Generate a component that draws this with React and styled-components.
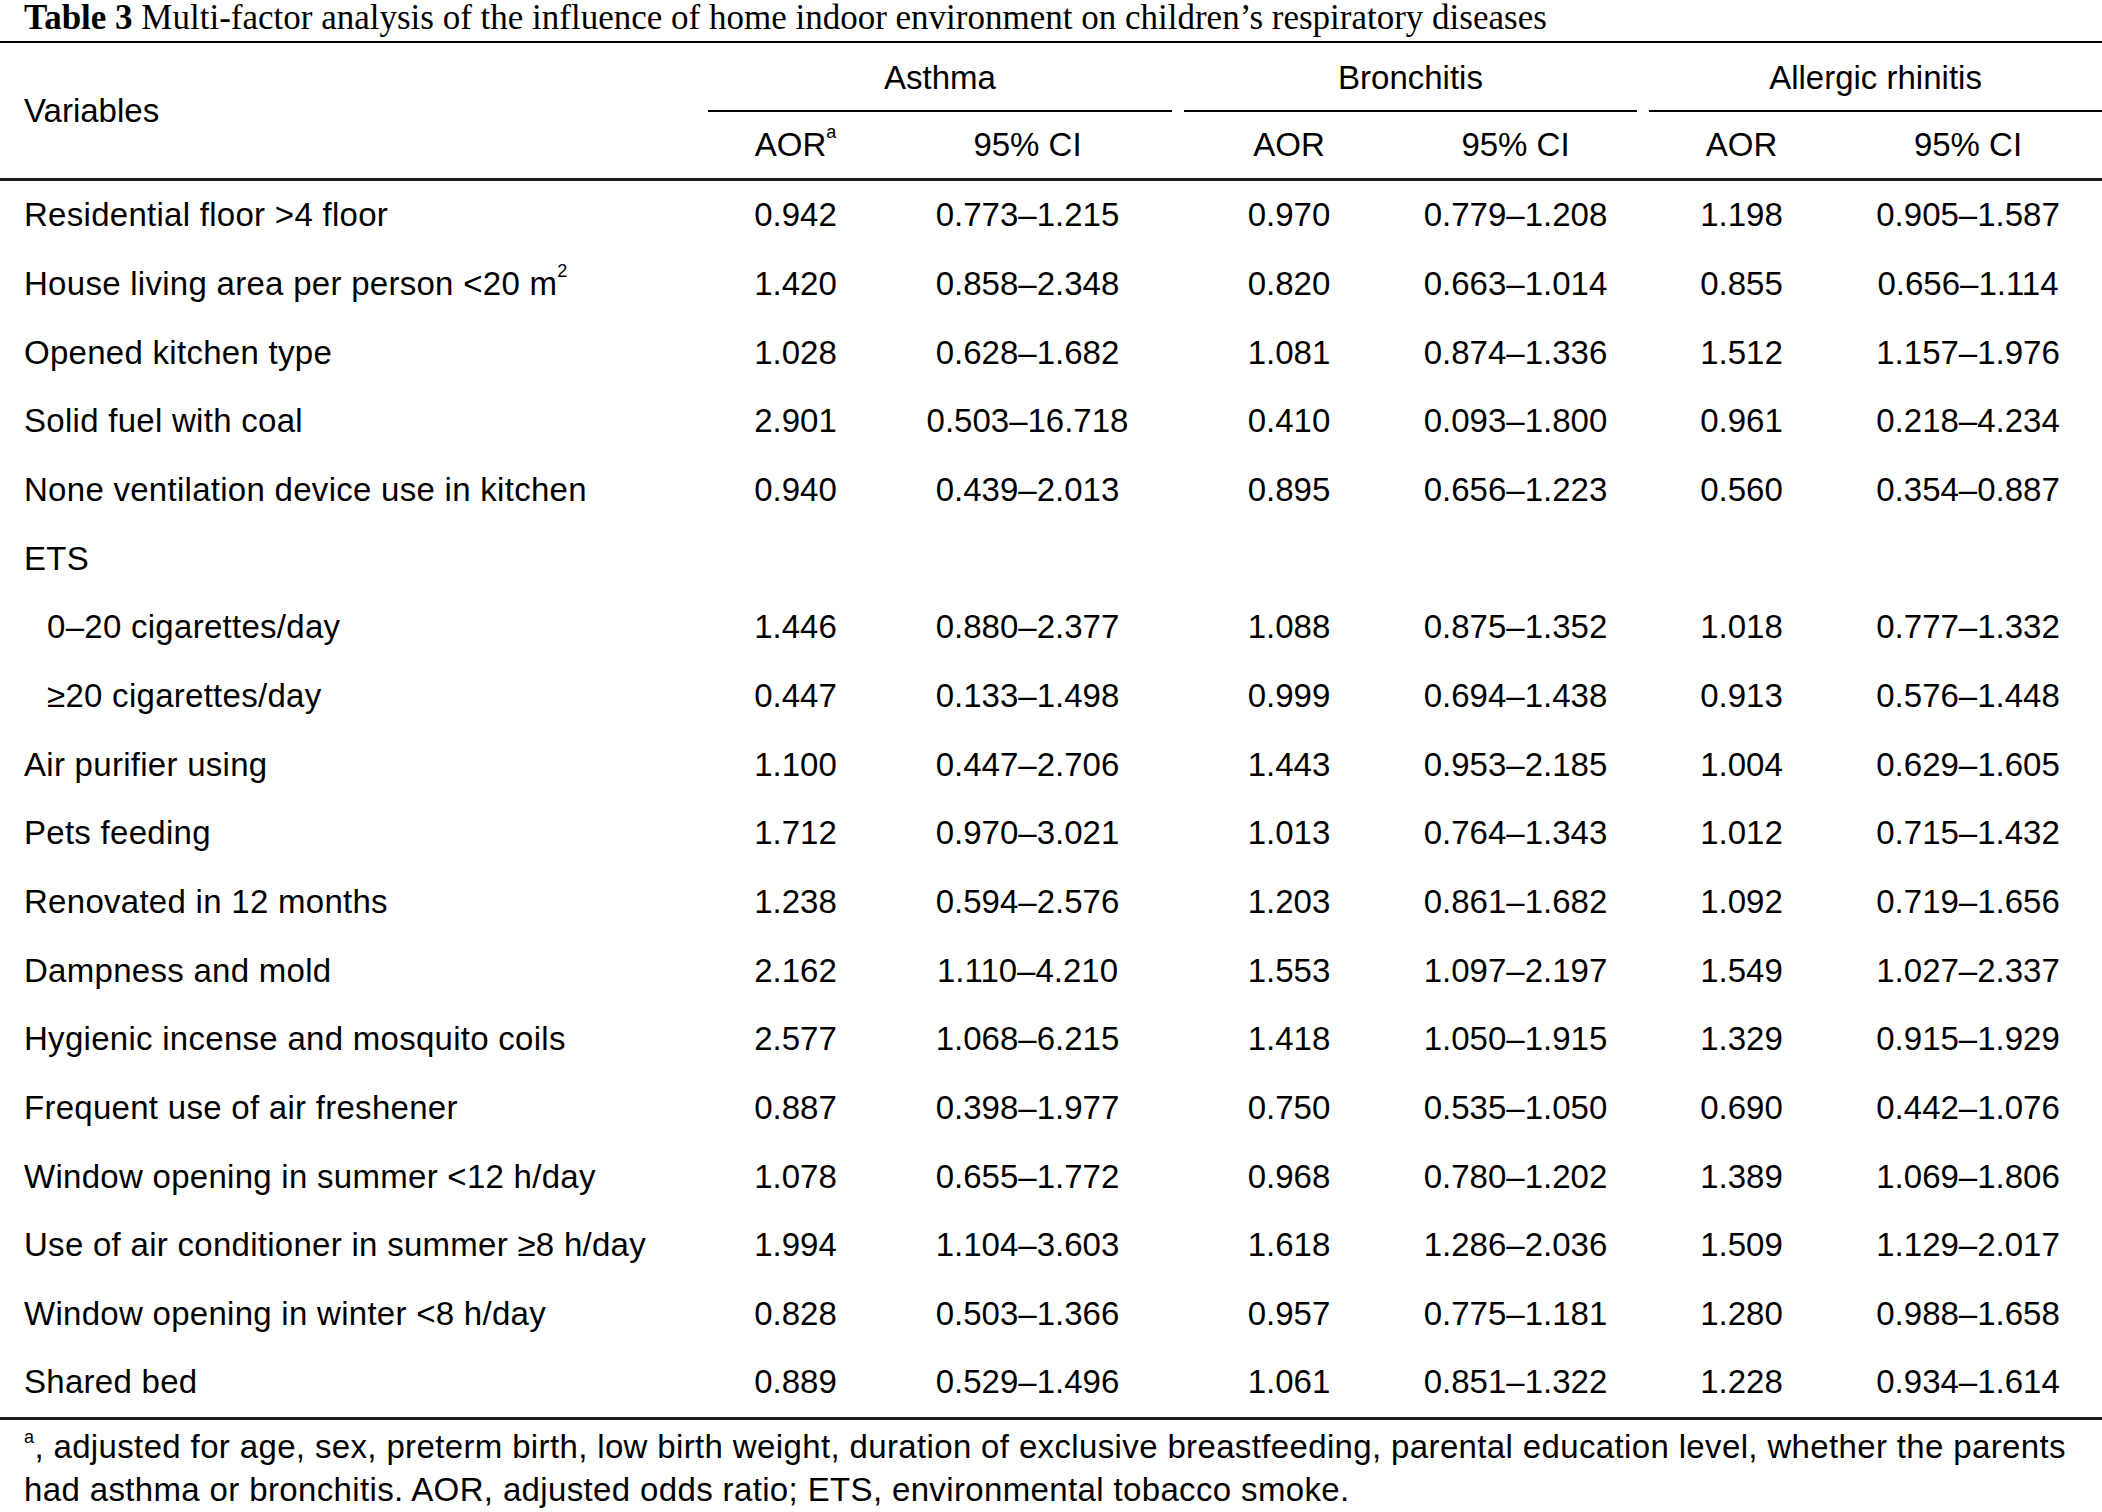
import React from "react";
import styled, { createGlobalStyle } from "styled-components";

const Global = createGlobalStyle`
  html, body { margin: 0; padding: 0; background: #fff; }
  body { color: #000; font-family: "Liberation Sans", Arial, sans-serif; }
`;

const Page = styled.div`
  width: 2102px;
  background: #fff;
`;

const Caption = styled.div`
  height: 41px;
  padding-left: 24px;
  box-sizing: border-box;
  font-family: "Liberation Serif", "Times New Roman", serif;
  font-size: 35px;
  line-height: 36px;
  letter-spacing: 0;
  white-space: nowrap;
  color: #000;
`;

const CaptionLabel = styled.b`
  font-weight: 700;
`;

const Table = styled.table`
  width: 2102px;
  table-layout: fixed;
  border-collapse: separate;
  border-spacing: 0;
  border-top: 2px solid #000;
  border-bottom: 3px solid #1c1c1c;
  font-size: 33px;
`;

const HeadCell = styled.th`
  box-sizing: border-box;
  padding: 0;
  font-weight: 400;
  text-align: ${(p) => (p.$left ? "left" : "center")};
  padding-left: ${(p) => (p.$left ? "24px" : "0")};
  height: ${(p) => p.$h || 66}px;
  vertical-align: middle;
  border-bottom: ${(p) => (p.$rule ? `${p.$rule}px solid ${p.$rule > 2 ? "#1c1c1c" : "#000"}` : "none")};
  white-space: nowrap;
`;

const GroupCell = styled(HeadCell)`
  padding-top: 2px;
`;

const Row = styled.tr``;

const Cell = styled.td`
  box-sizing: border-box;
  padding: 0;
  height: 68.67px;
  text-align: ${(p) => (p.$left ? "left" : "center")};
  padding-left: ${(p) => (p.$left ? (p.$indent ? "47px" : "24px") : "0")};
  letter-spacing: ${(p) => (p.$left ? "0.28px" : "0")};
  vertical-align: middle;
  white-space: nowrap;
`;

const Sup = styled.sup`
  font-size: 18px;
  vertical-align: top;
  position: relative;
  top: -3px;
  line-height: 1;
`;

const Note = styled.p`
  margin: 5px 0 0;
  padding: 0 20px 0 24px;
  font-size: 33px;
  line-height: 43px;
  letter-spacing: 0.36px;
`;

const NoteSup = styled.sup`
  font-size: 18px;
  vertical-align: top;
  position: relative;
  top: 3px;
  line-height: 1;
`;

const rows = [
  { label: "Residential floor >4 floor", v: ["0.942", "0.773–1.215", "0.970", "0.779–1.208", "1.198", "0.905–1.587"] },
  { label: <>House living area per person &lt;20 m<Sup>2</Sup></>, v: ["1.420", "0.858–2.348", "0.820", "0.663–1.014", "0.855", "0.656–1.114"] },
  { label: "Opened kitchen type", v: ["1.028", "0.628–1.682", "1.081", "0.874–1.336", "1.512", "1.157–1.976"] },
  { label: "Solid fuel with coal", v: ["2.901", "0.503–16.718", "0.410", "0.093–1.800", "0.961", "0.218–4.234"] },
  { label: "None ventilation device use in kitchen", v: ["0.940", "0.439–2.013", "0.895", "0.656–1.223", "0.560", "0.354–0.887"] },
  { label: "ETS", v: null },
  { label: "0–20 cigarettes/day", indent: true, v: ["1.446", "0.880–2.377", "1.088", "0.875–1.352", "1.018", "0.777–1.332"] },
  { label: "≥20 cigarettes/day", indent: true, v: ["0.447", "0.133–1.498", "0.999", "0.694–1.438", "0.913", "0.576–1.448"] },
  { label: "Air purifier using", v: ["1.100", "0.447–2.706", "1.443", "0.953–2.185", "1.004", "0.629–1.605"] },
  { label: "Pets feeding", v: ["1.712", "0.970–3.021", "1.013", "0.764–1.343", "1.012", "0.715–1.432"] },
  { label: "Renovated in 12 months", v: ["1.238", "0.594–2.576", "1.203", "0.861–1.682", "1.092", "0.719–1.656"] },
  { label: "Dampness and mold", v: ["2.162", "1.110–4.210", "1.553", "1.097–2.197", "1.549", "1.027–2.337"] },
  { label: "Hygienic incense and mosquito coils", v: ["2.577", "1.068–6.215", "1.418", "1.050–1.915", "1.329", "0.915–1.929"] },
  { label: "Frequent use of air freshener", v: ["0.887", "0.398–1.977", "0.750", "0.535–1.050", "0.690", "0.442–1.076"] },
  { label: "Window opening in summer <12 h/day", v: ["1.078", "0.655–1.772", "0.968", "0.780–1.202", "1.389", "1.069–1.806"] },
  { label: "Use of air conditioner in summer ≥8 h/day", v: ["1.994", "1.104–3.603", "1.618", "1.286–2.036", "1.509", "1.129–2.017"] },
  { label: "Window opening in winter <8 h/day", v: ["0.828", "0.503–1.366", "0.957", "0.775–1.181", "1.280", "0.988–1.658"] },
  { label: "Shared bed", v: ["0.889", "0.529–1.496", "1.061", "0.851–1.322", "1.228", "0.934–1.614"] },
];

const widths = [708, 175, 289, 12, 210, 243, 12, 185, 268];

export default function App() {
  return (
    <Page>
      <Global />
      <Caption>
        <CaptionLabel>Table 3</CaptionLabel> Multi-factor analysis of the influence of home indoor environment on children’s respiratory diseases
      </Caption>
      <Table>
        <colgroup>
          {widths.map((w, i) => (
            <col key={i} style={{ width: w }} />
          ))}
        </colgroup>
        <thead>
          <tr>
            <HeadCell rowSpan={2} $left $rule={3} $h={69}>Variables</HeadCell>
            <GroupCell colSpan={2} $rule={2} $h={69}>Asthma</GroupCell>
            <HeadCell $h={69} />
            <GroupCell colSpan={2} $rule={2} $h={69}>Bronchitis</GroupCell>
            <HeadCell $h={69} />
            <GroupCell colSpan={2} $rule={2} $h={69}>Allergic rhinitis</GroupCell>
          </tr>
          <tr>
            <HeadCell $rule={3} $h={69}>AOR<Sup>a</Sup></HeadCell>
            <HeadCell $rule={3} $h={69}>95% CI</HeadCell>
            <HeadCell $rule={3} $h={69} />
            <HeadCell $rule={3} $h={69}>AOR</HeadCell>
            <HeadCell $rule={3} $h={69}>95% CI</HeadCell>
            <HeadCell $rule={3} $h={69} />
            <HeadCell $rule={3} $h={69}>AOR</HeadCell>
            <HeadCell $rule={3} $h={69}>95% CI</HeadCell>
          </tr>
        </thead>
        <tbody>
          {rows.map((r, i) => (
            <Row key={i}>
              <Cell $left $indent={r.indent}>{r.label}</Cell>
              {r.v ? (
                <>
                  <Cell>{r.v[0]}</Cell>
                  <Cell>{r.v[1]}</Cell>
                  <Cell />
                  <Cell>{r.v[2]}</Cell>
                  <Cell>{r.v[3]}</Cell>
                  <Cell />
                  <Cell>{r.v[4]}</Cell>
                  <Cell>{r.v[5]}</Cell>
                </>
              ) : (
                <Cell colSpan={8} />
              )}
            </Row>
          ))}
        </tbody>
      </Table>
      <Note>
        <NoteSup>a</NoteSup>, adjusted for age, sex, preterm birth, low birth weight, duration of exclusive breastfeeding, parental education level, whether the parents had asthma or bronchitis. AOR, adjusted odds ratio; ETS, environmental tobacco smoke.
      </Note>
    </Page>
  );
}
